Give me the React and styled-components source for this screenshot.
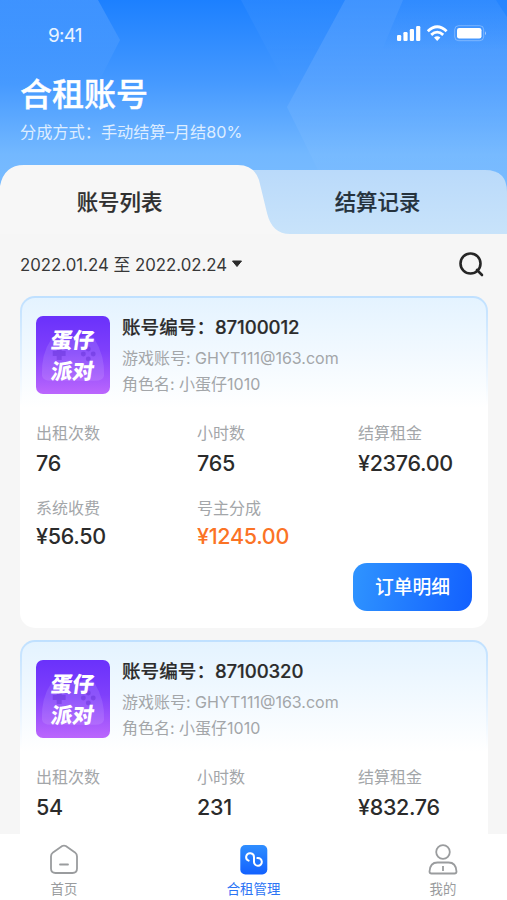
import React from 'react';
import styled, { createGlobalStyle } from 'styled-components';

const GlobalStyle = createGlobalStyle`
  * { box-sizing: border-box; }

  body {
    margin: 0;
    background: #f6f6f6;
    font-family: Inter, "Noto Sans CJK SC", sans-serif;
    color: #2b2b2b;
  }
`;

const Page = styled.div`
  width: 507px;
  height: 900px;
  display: flex;
  flex-direction: column;
  overflow: hidden;
  background: #f6f6f6;
`;

const Hero = styled.header`
  position: relative;
  flex: none;
  height: 234px;
  display: flex;
  flex-direction: column;
  isolation: isolate;
`;

const Backdrop = styled.svg`
  position: absolute;
  inset: 0;
  z-index: -1;
`;

const StatusBar = styled.div`
  display: flex;
  justify-content: space-between;
  align-items: center;
  height: 68px;
  padding: 0 21px 0 48px;
  color: #e9f3ff;
  font-size: 19px;
  letter-spacing: -0.8px;
`;

const Clock = styled.span`
  padding-top: 2px;
`;

const StatusIcons = styled.svg`
  display: block;
`;

const Title = styled.h1`
  margin: 5px 0 0 20px;
  padding-top: 1px;
  font-size: 32px;
  line-height: 42px;
  font-weight: 500;
  color: #fff;
  -webkit-text-stroke: 0.4px #fff;
`;

const Subtitle = styled.p`
  margin: 4px 0 0 20px;
  font-size: 16.2px;
  line-height: 24px;
  color: #deedff;
`;

const Tabs = styled.nav`
  display: flex;
  height: 69px;
  margin-top: auto;
`;

const Tab = styled.button`
  flex: none;
  width: ${({ $wide }) => ($wide ? 268 : 239)}px;
  padding: 5px 0 0 ${({ $wide }) => ($wide ? 9 : 0)}px;
  border: 0;
  background: none;
  font: 500 21.4px/30px Inter, "Noto Sans CJK SC", sans-serif;
  color: ${({ $active }) => ($active ? '#2f2f2f' : '#25323d')};
  -webkit-text-stroke: 0.2px currentColor;
`;

const Filter = styled.div`
  flex: none;
  display: flex;
  justify-content: space-between;
  align-items: center;
  height: 62px;
  padding: 0 22px 2px 20px;
`;

const DateRange = styled.div`
  display: flex;
  align-items: center;
  gap: 4px;
  font-size: 16.8px;
  white-space: pre;
  color: #383838;
`;

const List = styled.main`
  flex: 1;
  min-height: 0;
  display: flex;
  flex-direction: column;
  gap: 12px;
  padding: 0 19px 0 20px;
  overflow: hidden;
`;

const Card = styled.article`
  flex: none;
  height: 332px;
  padding: 2px;
  border-radius: 15px;
  background: linear-gradient(#bfe0ff, #fff 110px);
`;

const CardBody = styled.div`
  height: 100%;
  padding: 18px 14px 15px;
  border-radius: 13px;
  background: linear-gradient(#e4f3ff, #fff 110px);
`;

const CardHead = styled.div`
  display: flex;
  gap: 12px;
  height: 78px;
`;

const GameIcon = styled.div`
  position: relative;
  flex: none;
  width: 74px;
  height: 78px;
  border-radius: 7px;
  background: linear-gradient(#6a31fb, #7f40fb 45%, #bb66fd);
  overflow: hidden;
`;

const Gamepad = styled.svg`
  position: absolute;
  inset: 0;
`;

const GameName = styled.div`
  position: relative;
  padding: 9px 0 0 15px;
  font-size: 21.5px;
  line-height: 31px;
  font-weight: 900;
  color: #fff;
`;

const GameNameLine = styled.span`
  display: block;
  transform: skewX(-8deg);
`;

const AccountNo = styled.h2`
  margin: -3px 0 0;
  font-size: 18.6px;
  line-height: 28px;
  font-weight: 500;
  white-space: nowrap;
  -webkit-text-stroke: 0.2px currentColor;

  span { letter-spacing: -0.1px; }
`;

const Meta = styled.p`
  margin: 0;
  padding-top: ${({ $first }) => ($first ? 5 : 0)}px;
  font-size: 16px;
  line-height: 25.5px;
  color: #a3a6a9;
  white-space: nowrap;
`;

const Stats = styled.dl`
  display: grid;
  grid-template-columns: repeat(3, 161px);
  row-gap: 17px;
  margin: 27px 0 0;
`;

const Label = styled.dt`
  font-size: 16px;
  line-height: 24px;
  color: #a3a6a9;
`;

const Value = styled.dd`
  margin: ${({ $tight }) => ($tight ? 1 : 3)}px 0 0;
  font-size: 21.5px;
  line-height: 31px;
  font-weight: 500;
  letter-spacing: -0.3px;
  color: ${({ $accent }) => ($accent ? '#fb7325' : '#2b2b2b')};
`;

const DetailButton = styled.button`
  display: block;
  width: 119px;
  height: 48px;
  margin: 11px 0 0 auto;
  padding: 2px 0 0;
  border: 0;
  border-radius: 14px;
  background: linear-gradient(100deg, #2f94ff, #1260ff);
  color: #fff;
  font: 500 18.8px/46px Inter, "Noto Sans CJK SC", sans-serif;
`;

const BottomNav = styled.nav`
  flex: none;
  display: flex;
  justify-content: space-between;
  height: 66px;
  padding: 10px 9px 0;
  background: #fff;
`;

const NavItem = styled.a`
  width: 110px;
  display: flex;
  flex-direction: column;
  align-items: center;
  gap: 4px;
  font-size: 13.4px;
  line-height: 20px;
  color: ${({ $active }) => ($active ? '#2c74f5' : '#9a9c9e')};
`;

const accounts = [
  {
    no: '87100012',
    stats: [
      { label: '出租次数', value: '76' },
      { label: '小时数', value: '765' },
      { label: '结算租金', value: '¥2376.00' },
      { label: '系统收费', value: '¥56.50' },
      { label: '号主分成', value: '¥1245.00', accent: true },
    ],
  },
  {
    no: '87100320',
    stats: [
      { label: '出租次数', value: '54' },
      { label: '小时数', value: '231' },
      { label: '结算租金', value: '¥832.76' },
    ],
  },
];

const HeroBackdrop = () => (
  <Backdrop width="507" height="234" viewBox="0 0 507 234">
    <defs>
      <linearGradient id="sky" x1="0" y1="0" x2="0" y2="1">
        <stop offset="0" stopColor="#1c80ff" />
        <stop offset="0.35" stopColor="#4599ff" />
        <stop offset="0.66" stopColor="#73b8ff" />
        <stop offset="1" stopColor="#80c0ff" />
      </linearGradient>
      <linearGradient id="facet" gradientUnits="userSpaceOnUse" x1="0" y1="0" x2="0" y2="165">
        <stop offset="0" stopColor="#fff" stopOpacity="0.16" />
        <stop offset="1" stopColor="#fff" stopOpacity="0.02" />
      </linearGradient>
      <linearGradient id="facetShort" gradientUnits="userSpaceOnUse" x1="0" y1="0" x2="0" y2="85">
        <stop offset="0" stopColor="#fff" stopOpacity="0.15" />
        <stop offset="1" stopColor="#fff" stopOpacity="0" />
      </linearGradient>
      <linearGradient id="shade" gradientUnits="userSpaceOnUse" x1="0" y1="0" x2="0" y2="50">
        <stop offset="0" stopColor="#1c80ff" stopOpacity="0.45" />
        <stop offset="1" stopColor="#1c80ff" stopOpacity="0" />
      </linearGradient>
      <linearGradient id="idleTab" x1="0" y1="0" x2="0" y2="1">
        <stop offset="0" stopColor="#badafa" />
        <stop offset="1" stopColor="#c8e3fa" />
      </linearGradient>
    </defs>
    <path d="M0 0H507V234H0Z" fill="url(#sky)" />
    <path d="M0 0H98L120 40L97 85H0Z" fill="url(#facetShort)" />
    <path d="M241 0H345L300 83H285Z" fill="url(#facetShort)" opacity="0.35" />
    <path d="M345 0H507V170H318L287 107Z" fill="url(#facet)" />
    <path d="M403 0H507V50H382Z" fill="url(#shade)" />
    <path d="M496 0H507V17Z" fill="#1c80ff" opacity="0.5" />
    <path d="M240 170H485Q507 170 507 192V234H240Z" fill="url(#idleTab)" />
    <path d="M0 234V186Q4 165 24 165H238Q254 165 259 180L267 213Q272 234 290 234Z" fill="#f7f7f7" />
  </Backdrop>
);

const Signals = () => (
  <StatusIcons width="90" height="20" viewBox="396 24 90 20" fill="#fff">
    <rect x="397" y="35" width="4.2" height="6" rx="1.2" />
    <rect x="403.4" y="32" width="4.2" height="9" rx="1.2" />
    <rect x="409.8" y="29" width="4.2" height="12" rx="1.2" />
    <rect x="416.1" y="26" width="4.2" height="15" rx="1.2" />
    <g fill="none" stroke="#fff" strokeWidth="2.8">
      <path d="M427.8 31.2Q437.2 22.2 446.6 31.2" />
      <path d="M431.2 34.9Q437.2 29.4 443.2 34.9" />
    </g>
    <path d="M434 37.6Q437.2 35 440.4 37.6L437.2 41Z" />
    <rect x="454.7" y="25.7" width="29" height="15" rx="4" fill="none" stroke="#fff" strokeOpacity="0.3" />
    <rect x="457" y="28" width="24.5" height="10.5" rx="2.2" />
    <path d="M485 31.2Q487 33.2 485 35.2Z" opacity="0.5" />
  </StatusIcons>
);

const GameBadge = () => (
  <GameIcon>
    <Gamepad width="74" height="78" viewBox="0 0 75 78">
      <path
        d="M16 22Q24 16 31 23H43Q50 16 59 22Q70 40 69 60Q68 65 60 65H15Q7 65 6 60Q5 38 16 22Z"
        fill="#fff"
        opacity="0.11"
      />
      <path d="M17 35H21V31H26V35H30V40H26V44H21V40H17Z" fill="#5522c8" opacity="0.35" />
      <g fill="#5522c8" opacity="0.35">
        <circle cx="53" cy="33" r="2.5" />
        <circle cx="48" cy="38" r="2.5" />
        <circle cx="58" cy="38" r="2.5" />
        <circle cx="53" cy="43" r="2.5" />
      </g>
    </Gamepad>
    <GameName>
      <GameNameLine>蛋仔</GameNameLine>
      <GameNameLine>派对</GameNameLine>
    </GameName>
  </GameIcon>
);

const AccountCard = ({ no, stats }) => (
  <Card>
    <CardBody>
      <CardHead>
        <GameBadge />
        <div>
          <AccountNo>账号编号：<span>{no}</span></AccountNo>
          <Meta $first>游戏账号: GHYT111@163.com</Meta>
          <Meta>角色名: 小蛋仔1010</Meta>
        </div>
      </CardHead>
      <Stats>
        {stats.map(({ label, value, accent }, i) => (
          <div key={label}>
            <Label>{label}</Label>
            <Value $accent={accent} $tight={i > 2}>{value}</Value>
          </div>
        ))}
      </Stats>
      {stats.length > 3 && <DetailButton>订单明细</DetailButton>}
    </CardBody>
  </Card>
);

const App = () => (
  <Page>
    <GlobalStyle />
    <Hero>
      <HeroBackdrop />
      <StatusBar>
        <Clock>9:41</Clock>
        <Signals />
      </StatusBar>
      <Title>合租账号</Title>
      <Subtitle>分成方式：手动结算–月结80%</Subtitle>
      <Tabs>
        <Tab $active>账号列表</Tab>
        <Tab $wide>结算记录</Tab>
      </Tabs>
    </Hero>
    <Filter>
      <DateRange>
        2022.01.24 至 2022.02.24
        <svg width="12" height="8" viewBox="0 0 12 8">
          <path d="M1.5 1H10.5L6 6.5Z" fill="#2b2b2b" stroke="#2b2b2b" strokeLinejoin="round" />
        </svg>
      </DateRange>
      <svg width="27" height="27" viewBox="0 0 27 27" fill="none" stroke="#262626" strokeWidth="2.6" strokeLinecap="round">
        <circle cx="12.5" cy="12.5" r="10" />
        <path d="M19 19L24 24" />
      </svg>
    </Filter>
    <List>
      {accounts.map((account) => <AccountCard key={account.no} {...account} />)}
    </List>
    <BottomNav>
      <NavItem>
        <svg width="30" height="31" viewBox="0 0 30 31" fill="none" stroke="#9a9c9e" strokeWidth="1.8" strokeLinecap="round" strokeLinejoin="round">
          <path d="M13.2 2.1Q15 1 16.8 2.1L26 8.4Q28 10 28 12.5V24.5Q28 29 23.5 29H6.5Q2 29 2 24.5V12.5Q2 10 4 8.4Z" />
          <path d="M11 20.5H19" />
        </svg>
        首页
      </NavItem>
      <NavItem $active>
        <svg width="30" height="31" viewBox="0 0 30 31">
          <defs>
            <linearGradient id="share" x1="0" y1="0" x2="0" y2="1">
              <stop offset="0" stopColor="#2f8eff" />
              <stop offset="1" stopColor="#1261ff" />
            </linearGradient>
          </defs>
          <rect x="1.3" y="1" width="27" height="29.5" rx="5" fill="url(#share)" />
          <path
            d="M9.6 16.7A3.9 3.9 0 1 1 15 13V17.8A3.9 3.9 0 1 0 18.4 14"
            fill="none"
            stroke="#fff"
            strokeWidth="2"
            strokeLinecap="round"
          />
        </svg>
        合租管理
      </NavItem>
      <NavItem>
        <svg width="30" height="31" viewBox="0 0 30 31" fill="none" stroke="#9a9c9e" strokeWidth="1.8" strokeLinejoin="round">
          <circle cx="15" cy="8" r="6.8" />
          <path d="M3.5 29.5Q1.5 29.5 1.5 27.5Q2 18.5 9.5 18.5H20.5Q28 18.5 28.5 27.5Q28.5 29.5 26.5 29.5Z" />
          <path d="M15 22V27" />
        </svg>
        我的
      </NavItem>
    </BottomNav>
  </Page>
);

export default App;
